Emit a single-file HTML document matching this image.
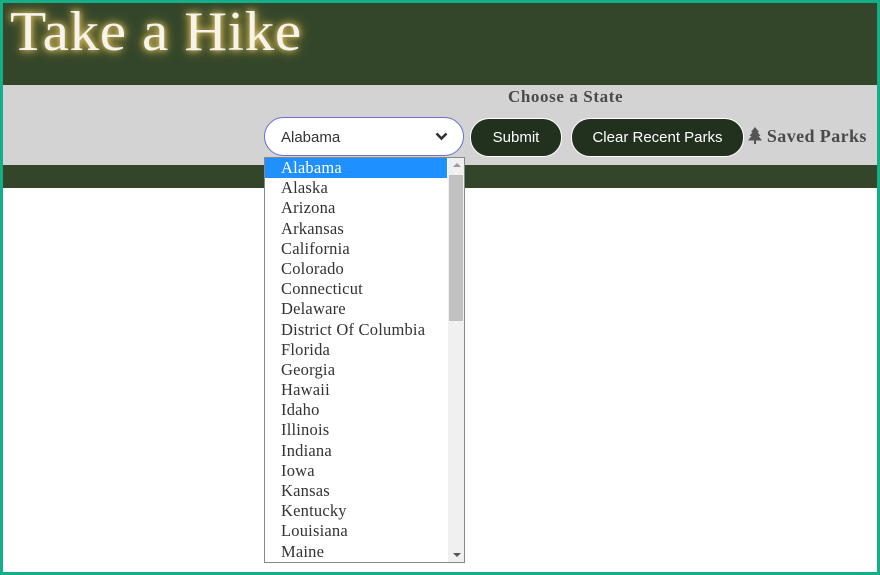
<!DOCTYPE html>
<html><head><style>
body{margin:0;width:880px;height:575px;overflow:hidden;font-family:"Liberation Serif",serif;background:#fff}
.frame{position:absolute;left:0;top:0;width:874px;height:569px;border:3px solid #14ae88;}
.hdr{position:absolute;left:3px;top:3px;width:874px;height:82px;background:#33462a}
.title{position:absolute;left:7px;top:-3px;font-size:56px;color:#f6f3ea;text-shadow:0 0 6px #f0d070,0 0 12px #d8b040;transform:scaleX(1.06);transform-origin:left;letter-spacing:0.5px}
.gray{position:absolute;left:3px;top:85px;width:874px;height:80px;background:#d3d3d3}
.green{position:absolute;left:3px;top:165px;width:874px;height:23px;background:#33462a}
.cs{position:absolute;left:508px;top:87px;font-weight:bold;font-size:17px;letter-spacing:0.6px;color:#4a4a4a}
.sel{position:absolute;left:264px;top:117px;width:200px;height:39px;border:1.5px solid #6a6fd0;border-radius:20px;background:#fff;box-sizing:border-box;font-family:"Liberation Sans",sans-serif;font-size:15px;color:#333;padding:11px 0 0 16px}
.btn{position:absolute;top:118px;height:39px;border-radius:19px;background:#22301e;border:1px solid #fff;box-sizing:border-box;color:#fff;font-family:"Liberation Sans",sans-serif;font-size:15px;text-align:center;line-height:38px}
.sp{position:absolute;left:748px;top:126px;font-weight:bold;font-size:18px;letter-spacing:0.4px;color:#4a4a4a}
.list{position:absolute;left:264px;top:157px;width:201px;height:406px;border:1px solid #888;box-sizing:border-box;background:#fff;overflow:hidden}
.it{height:20.2px;line-height:20px;padding-left:16px;font-size:16.5px;letter-spacing:0.2px;color:#333;width:166px;white-space:nowrap}
.sb{position:absolute;left:183px;top:0;width:17px;height:404px;background:#f0f0f0}
</style></head><body>
<div class="hdr"><div class="title">Take a Hike</div></div>
<div class="gray"></div><div class="green"></div>
<div class="cs">Choose a State</div>
<div class="sel">Alabama<svg style="position:absolute;left:170px;top:14px" width="13" height="9" viewBox="0 0 13 9"><path d="M1.5 1.5L6.5 6.5L11.5 1.5" stroke="#333" stroke-width="2.6" fill="none"/></svg></div>
<div class="btn" style="left:470px;width:92px">Submit</div>
<div class="btn" style="left:571px;width:173px">Clear Recent Parks</div>
<div class="sp"><svg width="14" height="17" viewBox="0 0 14 17" style="vertical-align:-2px"><path d="M7 0L11 5H9.5L12.5 9H10.5L14 13.5H8V17H6V13.5H0L3.5 9H1.5L4.5 5H3Z" fill="#555"/></svg> Saved Parks</div>
<div class="list">
<div class="it" style="background:#1e90ff;color:#fff;width:166px">Alabama</div>
<div class="it">Alaska</div><div class="it">Arizona</div><div class="it">Arkansas</div><div class="it">California</div><div class="it">Colorado</div><div class="it">Connecticut</div><div class="it">Delaware</div><div class="it">District Of Columbia</div><div class="it">Florida</div><div class="it">Georgia</div><div class="it">Hawaii</div><div class="it">Idaho</div><div class="it">Illinois</div><div class="it">Indiana</div><div class="it">Iowa</div><div class="it">Kansas</div><div class="it">Kentucky</div><div class="it">Louisiana</div><div class="it">Maine</div>
<div class="sb"><div style="position:absolute;left:5px;top:5px;border:4px solid transparent;border-bottom:4px solid #999;border-top:0"></div><div style="position:absolute;left:1px;top:17px;width:14px;height:146px;background:#c1c1c1"></div><div style="position:absolute;left:5px;top:395px;border:4px solid transparent;border-top:4px solid #555;border-bottom:0"></div></div>
</div>
<div class="frame"></div>
</body></html>
